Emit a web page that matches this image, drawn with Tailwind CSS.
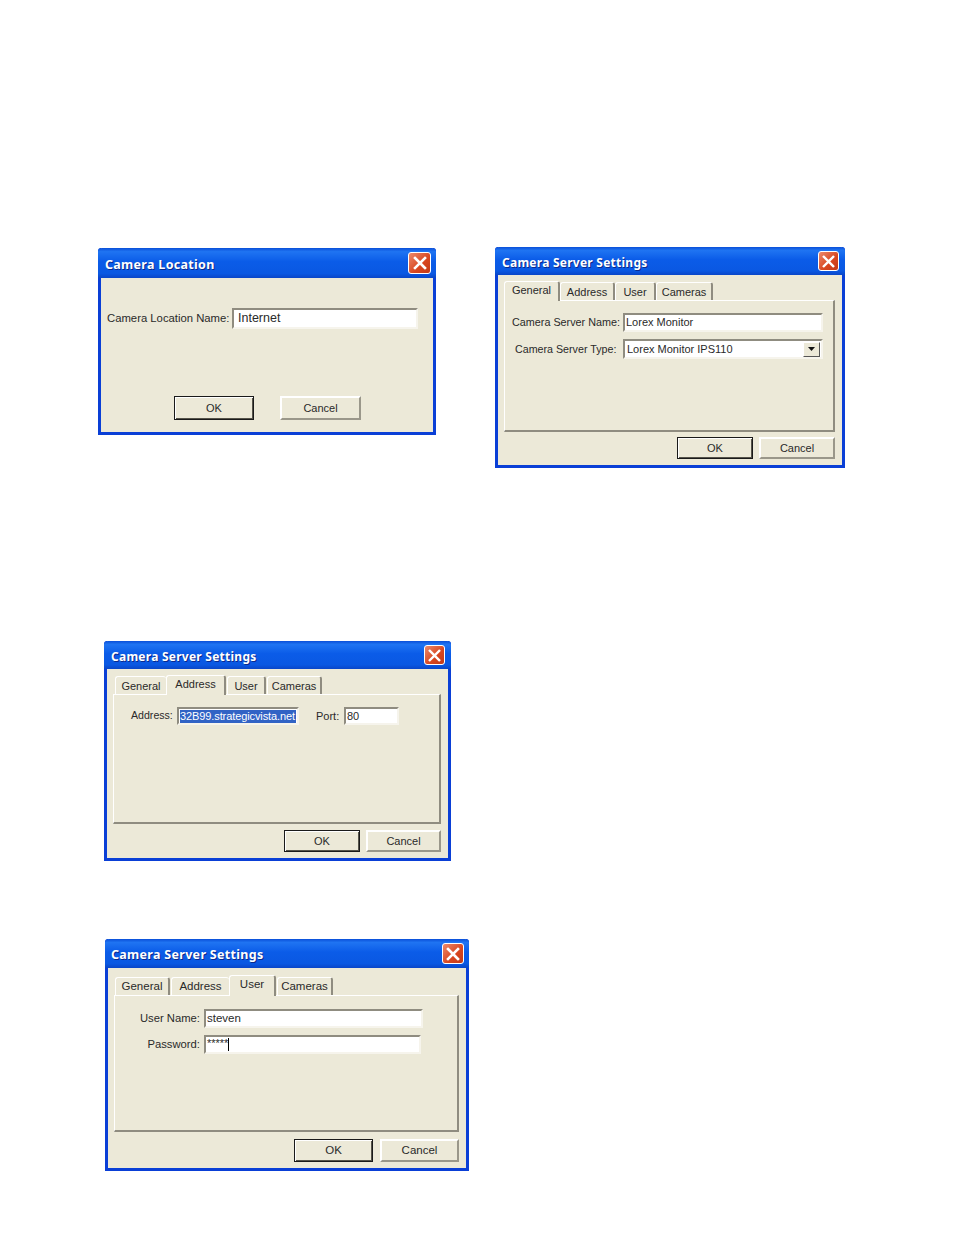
<!DOCTYPE html>
<html lang="en">
  <head>
    <meta charset="UTF-8" />
    <title>Camera settings</title>
    <script src="https://cdn.jsdelivr.net/npm/@tailwindcss/browser@4"></script>
  </head>
  <body class="bg-white font-['Liberation_Sans',sans-serif] text-[#2a2a2a]">
    <div class="w-[954px] h-[1235px] overflow-hidden pt-[247px]">

      <div class="flex items-start">
        <!-- Camera Location -->
        <div class="ml-[98px] mt-px w-[338px] h-[187px] flex flex-col rounded-t-[3px] border-[3px] border-t-0 border-[#0a3fd6] bg-[#ece9d8]">
          <div class="h-[30px] -mx-[3px] shrink-0 flex items-center justify-between pl-[7px] pr-[5px] rounded-t-[4px] bg-[linear-gradient(180deg,#0a4fd8_0%,#1f74f2_12%,#0b5ce8_45%,#0a58e2_85%,#0a46c8_100%)]">
            <span class="pt-[5px] font-['Noto_Sans',sans-serif] text-[12.5px] font-bold tracking-[0.3px] text-white [text-shadow:1px_1px_#0c2a8c]">Camera Location</span>
            <span class="w-[23px] h-[22px] flex items-center justify-center rounded-[3px] border border-white bg-[linear-gradient(135deg,#ec8a6c,#d8461f_60%,#c23a18)]">
              <svg class="w-[14px] h-[14px]" viewBox="0 0 14 14"><path d="M2 2 L12 12 M12 2 L2 12" stroke="#fff" stroke-width="2.6" stroke-linecap="square" /></svg>
            </span>
          </div>
          <div class="flex items-center pl-[6px] pt-[30px] text-[11.3px]">
            <span class="w-[125px] whitespace-nowrap">Camera Location Name:</span>
            <div class="w-[186px] h-[21px] flex items-center pl-[4px] bg-white border-[2px] border-t-[#8f8c80] border-l-[#8f8c80] border-r-[#f6f4ec] border-b-[#f6f4ec] text-[12.5px]">Internet</div>
          </div>
          <div class="flex pl-[73px] pt-[67px] gap-[26px] text-[11px]">
            <div class="w-[80px] h-[24px] flex items-center justify-center border border-[#1a1a1a] shadow-[inset_1px_1px_#fff,inset_-1px_-1px_#55534a]">OK</div>
            <div class="w-[81px] h-[24px] flex items-center justify-center border-[2px] border-t-white border-l-white border-r-[#9a978a] border-b-[#9a978a]">Cancel</div>
          </div>
        </div>

        <!-- General tab -->
        <div class="ml-[59px] w-[350px] h-[221px] flex flex-col rounded-t-[3px] border-[3px] border-t-0 border-[#0a3fd6] bg-[#ece9d8]">
          <div class="h-[28px] -mx-[3px] shrink-0 flex items-center justify-between pl-[7px] pr-[6px] rounded-t-[4px] bg-[linear-gradient(180deg,#0a4fd8_0%,#1f74f2_12%,#0b5ce8_45%,#0a58e2_85%,#0a46c8_100%)]">
            <span class="pt-[3px] font-['Noto_Sans',sans-serif] text-[12px] font-bold tracking-[0.25px] text-white [text-shadow:1px_1px_#0c2a8c]">Camera Server Settings</span>
            <span class="w-[21px] h-[20px] flex items-center justify-center rounded-[3px] border border-white bg-[linear-gradient(135deg,#ec8a6c,#d8461f_60%,#c23a18)]">
              <svg class="w-[13px] h-[13px]" viewBox="0 0 14 14"><path d="M2 2 L12 12 M12 2 L2 12" stroke="#fff" stroke-width="2.6" stroke-linecap="square" /></svg>
            </span>
          </div>
          <div class="flex items-end pl-[6px] pt-[6px] h-[25px] text-[11px]">
            <div class="relative z-10 -mb-px w-[56px] h-[20px] pb-[2px] flex items-center justify-center bg-[#ece9d8] rounded-t-[3px] border-t border-l border-t-white border-l-white border-r-[2px] border-r-[#8f8c80]">General</div>
            <div class="w-[55px] h-[18px] pt-[2px] flex items-center justify-center rounded-t-[3px] border-t border-l border-t-white border-l-white border-r-[2px] border-r-[#8f8c80]">Address</div>
            <div class="w-[41px] h-[18px] pt-[2px] flex items-center justify-center rounded-t-[3px] border-t border-l border-t-white border-l-white border-r-[2px] border-r-[#8f8c80]">User</div>
            <div class="w-[57px] h-[18px] pt-[2px] flex items-center justify-center rounded-t-[3px] border-t border-l border-t-white border-l-white border-r-[2px] border-r-[#8f8c80]">Cameras</div>
          </div>
          <div class="ml-[6px] w-[331px] h-[132px] pt-[12px] border-t border-l border-t-white border-l-white border-r-[2px] border-b-[2px] border-r-[#8f8c80] border-b-[#8f8c80] text-[11px]">
            <div class="flex items-center">
              <span class="w-[118px] pl-[7px] whitespace-nowrap text-[10.8px]">Camera Server Name:</span>
              <div class="w-[200px] h-[19px] flex items-center pl-[1px] bg-white border-[2px] border-t-[#8f8c80] border-l-[#8f8c80] border-r-[#f6f4ec] border-b-[#f6f4ec]">Lorex Monitor</div>
            </div>
            <div class="flex items-center mt-[7px]">
              <span class="w-[118px] pl-[10px] whitespace-nowrap text-[10.7px]">Camera Server Type:</span>
              <div class="w-[200px] h-[20px] flex items-center justify-between pl-[2px] pr-px bg-white border-[2px] border-t-[#8f8c80] border-l-[#8f8c80] border-r-[#f6f4ec] border-b-[#f6f4ec]">
                <span>Lorex Monitor IPS110</span>
                <span class="w-[17px] h-[15px] flex items-center justify-center bg-[#ece9d8] border border-t-white border-l-white border-r-[#555] border-b-[#555]">
                  <svg class="w-[7px] h-[4px]" viewBox="0 0 7 4"><path d="M0 0 H7 L3.5 4 Z" fill="#111" /></svg>
                </span>
              </div>
            </div>
          </div>
          <div class="flex pl-[179px] pt-[5px] gap-[6px] text-[11px]">
            <div class="w-[76px] h-[22px] flex items-center justify-center border border-[#1a1a1a] shadow-[inset_1px_1px_#fff,inset_-1px_-1px_#55534a]">OK</div>
            <div class="w-[76px] h-[22px] flex items-center justify-center border-[2px] border-t-white border-l-white border-r-[#9a978a] border-b-[#9a978a]">Cancel</div>
          </div>
        </div>
      </div>

      <!-- Address tab -->
      <div class="ml-[104px] mt-[173px] w-[347px] h-[220px] flex flex-col rounded-t-[3px] border-[3px] border-t-0 border-[#0a3fd6] bg-[#ece9d8]">
        <div class="h-[28px] -mx-[3px] shrink-0 flex items-center justify-between pl-[7px] pr-[6px] rounded-t-[4px] bg-[linear-gradient(180deg,#0a4fd8_0%,#1f74f2_12%,#0b5ce8_45%,#0a58e2_85%,#0a46c8_100%)]">
          <span class="pt-[3px] font-['Noto_Sans',sans-serif] text-[12px] font-bold tracking-[0.25px] text-white [text-shadow:1px_1px_#0c2a8c]">Camera Server Settings</span>
          <span class="w-[21px] h-[20px] flex items-center justify-center rounded-[3px] border border-white bg-[linear-gradient(135deg,#ec8a6c,#d8461f_60%,#c23a18)]">
            <svg class="w-[13px] h-[13px]" viewBox="0 0 14 14"><path d="M2 2 L12 12 M12 2 L2 12" stroke="#fff" stroke-width="2.6" stroke-linecap="square" /></svg>
          </span>
        </div>
        <div class="flex items-end pl-[8px] pt-[6px] h-[25px] text-[11px]">
          <div class="w-[51px] h-[18px] pt-px flex items-center justify-center rounded-t-[3px] border-t border-l border-t-white border-l-white">General</div>
          <div class="relative z-10 -mb-px w-[60px] h-[20px] pb-[2px] flex items-center justify-center bg-[#ece9d8] rounded-t-[3px] border-t border-l border-t-white border-l-white border-r-[2px] border-r-[#8f8c80]">Address</div>
          <div class="ml-px w-[39px] h-[18px] pt-px flex items-center justify-center rounded-t-[3px] border-t border-l border-t-white border-l-white border-r-[2px] border-r-[#8f8c80]">User</div>
          <div class="ml-px w-[55px] h-[18px] pt-px flex items-center justify-center rounded-t-[3px] border-t border-l border-t-white border-l-white border-r-[2px] border-r-[#8f8c80]">Cameras</div>
        </div>
        <div class="ml-[6px] w-[328px] h-[130px] pt-[12px] border-t border-l border-t-white border-l-white border-r-[2px] border-b-[2px] border-r-[#8f8c80] border-b-[#8f8c80] text-[11px]">
          <div class="flex items-center">
            <span class="w-[63px] pl-[17px] whitespace-nowrap text-[10.6px]">Address:</span>
            <div class="w-[122px] h-[18px] flex items-center bg-white border-[2px] border-t-[#8f8c80] border-l-[#8f8c80] border-r-[#f6f4ec] border-b-[#f6f4ec]">
              <span class="ml-px h-[13px] w-[116px] flex items-center whitespace-nowrap bg-[#3163c5] text-white tracking-[-0.1px]">32B99.strategicvista.net</span>
            </div>
            <span class="ml-[17px] w-[28px] whitespace-nowrap">Port:</span>
            <div class="w-[55px] h-[18px] flex items-center pl-px bg-white border-[2px] border-t-[#8f8c80] border-l-[#8f8c80] border-r-[#f6f4ec] border-b-[#f6f4ec]">80</div>
          </div>
        </div>
        <div class="flex pl-[177px] pt-[6px] gap-[6px] text-[11px]">
          <div class="w-[76px] h-[22px] flex items-center justify-center border border-[#1a1a1a] shadow-[inset_1px_1px_#fff,inset_-1px_-1px_#55534a]">OK</div>
          <div class="w-[75px] h-[22px] flex items-center justify-center border-[2px] border-t-white border-l-white border-r-[#9a978a] border-b-[#9a978a]">Cancel</div>
        </div>
      </div>

      <!-- User tab -->
      <div class="ml-[105px] mt-[78px] w-[364px] h-[232px] flex flex-col rounded-t-[3px] border-[3px] border-t-0 border-[#0a3fd6] bg-[#ece9d8]">
        <div class="h-[29px] -mx-[3px] shrink-0 flex items-center justify-between pl-[6px] pr-[5px] rounded-t-[4px] bg-[linear-gradient(180deg,#0a4fd8_0%,#1f74f2_12%,#0b5ce8_45%,#0a58e2_85%,#0a46c8_100%)]">
          <span class="pt-[3px] font-['Noto_Sans',sans-serif] text-[12.5px] font-bold tracking-[0.3px] text-white [text-shadow:1px_1px_#0c2a8c]">Camera Server Settings</span>
          <span class="w-[22px] h-[21px] flex items-center justify-center rounded-[3px] border border-white bg-[linear-gradient(135deg,#ec8a6c,#d8461f_60%,#c23a18)]">
            <svg class="w-[14px] h-[14px]" viewBox="0 0 14 14"><path d="M2 2 L12 12 M12 2 L2 12" stroke="#fff" stroke-width="2.6" stroke-linecap="square" /></svg>
          </span>
        </div>
        <div class="flex items-end pl-[7px] pt-[6px] h-[27px] text-[11.5px]">
          <div class="w-[55px] h-[18px] pt-px flex items-center justify-center rounded-t-[3px] border-t border-l border-t-white border-l-white border-r-[2px] border-r-[#8f8c80]">General</div>
          <div class="ml-px w-[58px] h-[18px] pt-px flex items-center justify-center rounded-t-[3px] border-t border-l border-t-white border-l-white">Address</div>
          <div class="relative z-10 -mb-px w-[47px] h-[21px] pb-[3px] flex items-center justify-center bg-[#ece9d8] rounded-t-[3px] border-t border-l border-t-white border-l-white border-r-[2px] border-r-[#8f8c80]">User</div>
          <div class="ml-px w-[56px] h-[18px] pt-px flex items-center justify-center rounded-t-[3px] border-t border-l border-t-white border-l-white border-r-[2px] border-r-[#8f8c80]">Cameras</div>
        </div>
        <div class="ml-[6px] w-[345px] h-[137px] pt-[13px] border-t border-l border-t-white border-l-white border-r-[2px] border-b-[2px] border-r-[#8f8c80] border-b-[#8f8c80] text-[11.25px]">
          <div class="flex items-center">
            <span class="w-[89px] text-right pr-[4px] whitespace-nowrap">User Name:</span>
            <div class="w-[219px] h-[19px] flex items-center pl-px bg-white border-[2px] border-t-[#8f8c80] border-l-[#8f8c80] border-r-[#f6f4ec] border-b-[#f6f4ec] text-[11.5px]">steven</div>
          </div>
          <div class="flex items-center mt-[7px]">
            <span class="w-[89px] text-right pr-[4px] whitespace-nowrap">Password:</span>
            <div class="w-[217px] h-[19px] flex items-center pl-px bg-white border-[2px] border-t-[#8f8c80] border-l-[#8f8c80] border-r-[#f6f4ec] border-b-[#f6f4ec]">
              <span class="text-[11px] leading-[11px] mb-[2px]">*****</span>
              <span class="w-px h-[13px] bg-black"></span>
            </div>
          </div>
        </div>
        <div class="flex pl-[186px] pt-[7px] gap-[7px] text-[11.5px]">
          <div class="w-[79px] h-[23px] flex items-center justify-center border border-[#1a1a1a] shadow-[inset_1px_1px_#fff,inset_-1px_-1px_#55534a]">OK</div>
          <div class="w-[79px] h-[23px] flex items-center justify-center border-[2px] border-t-white border-l-white border-r-[#9a978a] border-b-[#9a978a]">Cancel</div>
        </div>
      </div>

    </div>
  </body>
</html>
